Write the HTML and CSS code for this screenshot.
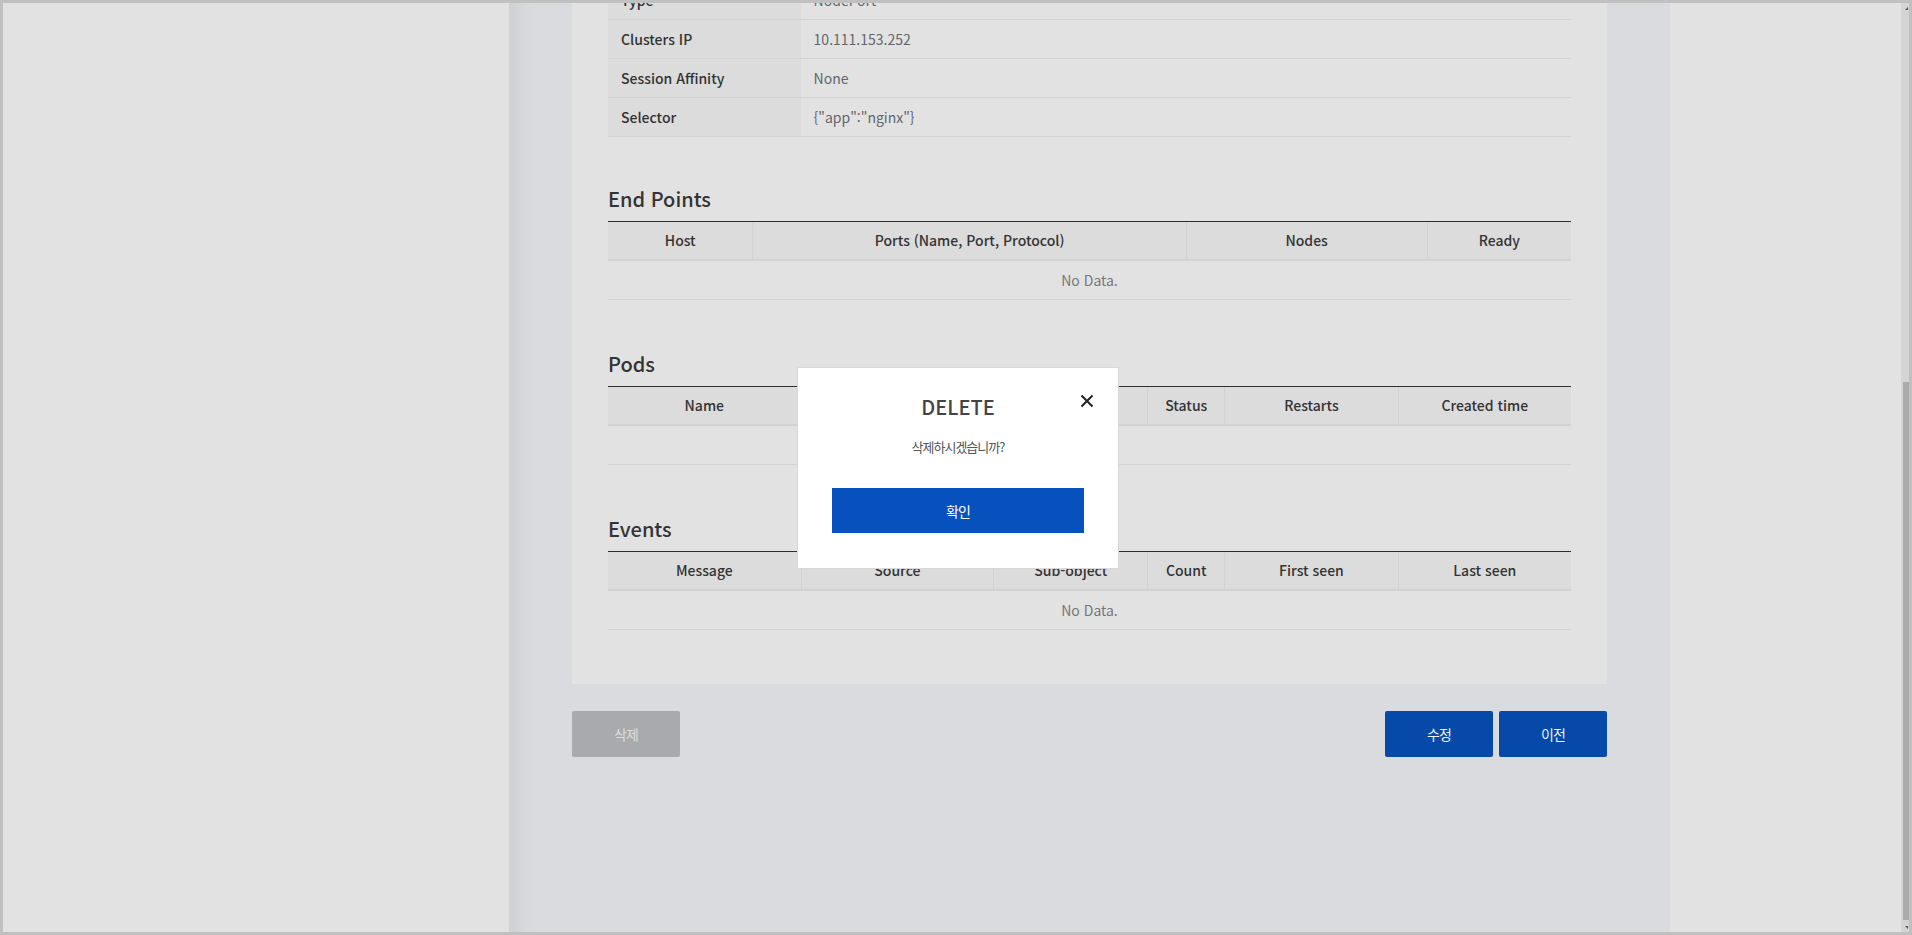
FILE: index.html
```html
<!DOCTYPE html>
<html lang="ko">
<head>
<meta charset="utf-8">
<title>Service Detail</title>
<link rel="stylesheet" href="styles.css">
</head>
<body>
<div class="frame">
  <div class="screen">
    <aside class="sidebar"></aside>
    <main class="main">
      <section class="card">
        <table class="info">
          <colgroup><col class="c-label"><col></colgroup>
          <tr><th>Type</th><td>NodePort</td></tr>
          <tr><th>Clusters IP</th><td>10.111.153.252</td></tr>
          <tr><th>Session Affinity</th><td>None</td></tr>
          <tr><th>Selector</th><td>{"app":"nginx"}</td></tr>
        </table>

        <div class="block first">
          <h3 class="block-title">End Points</h3>
          <table class="grid">
            <colgroup><col class="w15"><col class="w45"><col class="w25"><col class="w15"></colgroup>
            <thead><tr><th>Host</th><th>Ports (Name, Port, Protocol)</th><th>Nodes</th><th>Ready</th></tr></thead>
            <tbody><tr><td colspan="4" class="empty">No Data.</td></tr></tbody>
          </table>
        </div>

        <div class="block">
          <h3 class="block-title">Pods</h3>
          <table class="grid">
            <colgroup><col class="w20"><col class="w20"><col class="w16"><col class="w8"><col class="w18"><col class="w18"></colgroup>
            <thead><tr><th>Name</th><th>Namespace</th><th>Node</th><th>Status</th><th>Restarts</th><th>Created time</th></tr></thead>
            <tbody><tr><td colspan="6" class="empty">No Data.</td></tr></tbody>
          </table>
        </div>

        <div class="block">
          <h3 class="block-title">Events</h3>
          <table class="grid">
            <colgroup><col class="w20"><col class="w20"><col class="w16"><col class="w8"><col class="w18"><col class="w18"></colgroup>
            <thead><tr><th>Message</th><th>Source</th><th>Sub-object</th><th>Count</th><th>First seen</th><th>Last seen</th></tr></thead>
            <tbody><tr><td colspan="6" class="empty">No Data.</td></tr></tbody>
          </table>
        </div>
      </section>

      <div class="actions">
        <button class="btn btn-gray" type="button">삭제</button>
        <div class="actions-right">
          <button class="btn btn-blue" type="button">수정</button>
          <button class="btn btn-blue" type="button">이전</button>
        </div>
      </div>
    </main>
    <div class="side-right"></div>
  </div>

  <div class="scrollbar">
    <span class="arrow arrow-up"></span>
    <div class="thumb"></div>
    <span class="arrow arrow-down"></span>
  </div>

  <div class="modal-layer">
    <div class="modal" role="dialog">
      <button class="modal-close" type="button" aria-label="close">
        <svg width="14" height="14" viewBox="0 0 14 14"><path d="M1.5 1.5 L12.5 12.5 M12.5 1.5 L1.5 12.5" stroke="#222" stroke-width="2" fill="none"/></svg>
      </button>
      <div class="modal-title">DELETE</div>
      <p class="modal-msg">삭제하시겠습니까?</p>
      <button class="modal-ok" type="button">확인</button>
    </div>
  </div>
</div>
</body>
</html>
```

FILE: styles.css
```css
html, body {
  margin: 0;
  padding: 0;
  overflow: hidden;
}

body {
  font-family: "Noto Sans CJK KR", "Noto Sans", sans-serif;
  color: #333;
  background: #c0c0c0;
}

.frame {
  position: relative;
  box-sizing: border-box;
  width: 1912px;
  height: 935px;
  border: 3px solid #c0c0c0;
  display: flex;
  overflow: hidden;
}

.screen {
  flex: 1;
  display: flex;
  overflow: hidden;
  background: #e2e2e2;
}

.sidebar {
  width: 506px;
  flex: none;
  background: #e2e2e2;
}

.main {
  width: 1161px;
  flex: none;
  box-sizing: border-box;
  padding: 0 63px;
  background: linear-gradient(to right, #cfd0d4 0px, #d8d9dc 18px, #dadbde 30px, #dadbde 100%);
}

.side-right {
  flex: 1;
  background: #e2e2e2;
}

/* card */
.card {
  margin-top: -22px;
  background: #e2e2e2;
  padding: 0 36px 54px;
}

table {
  width: 100%;
  border-spacing: 0;
  table-layout: fixed;
  font-size: 14px;
}

.info th,
.info td {
  padding: 0 13px;
  line-height: 38px;
  border-bottom: 1px solid #d3d3d3;
  text-align: left;
  white-space: nowrap;
}

.info th {
  background: #dcdcdc;
  font-weight: 500;
  color: #333;
}

.info td {
  color: #62666d;
  font-weight: 400;
}

.c-label { width: 20%; }
.w8 { width: 8%; }
.w15 { width: 15%; }
.w16 { width: 16%; }
.w18 { width: 18%; }
.w20 { width: 20%; }
.w25 { width: 25%; }
.w45 { width: 45%; }

.block {
  margin-top: 50px;
}

.block.first {
  margin-top: 48px;
}

.block-title {
  margin: 0 0 8px;
  font-size: 20px;
  line-height: 28px;
  font-weight: 500;
  color: #333;
}

.grid {
  border-top: 1px solid #2e2e2e;
}

.grid th {
  padding: 0;
  line-height: 37px;
  background: #dcdcdc;
  border-bottom: 2px solid #d2d2d2;
  font-weight: 500;
  color: #333;
  text-align: center;
  white-space: nowrap;
}

.grid th + th {
  border-left: 1px solid #d2d2d2;
}

.grid td {
  padding: 0;
  line-height: 38px;
  border-bottom: 1px solid #d3d3d3;
  text-align: center;
}

.grid td.empty {
  color: #777;
}

/* actions */
.actions {
  margin-top: 27px;
  display: flex;
  justify-content: space-between;
}

.actions-right {
  display: flex;
  gap: 6px;
}

.btn {
  width: 108px;
  height: 46px;
  border: 0;
  border-radius: 2px;
  font-family: inherit;
  font-size: 14px;
  letter-spacing: -1px;
  padding: 0;
}

.btn-gray {
  background: #a9aaad;
  color: #dedede;
}

.btn-blue {
  background: #0749a9;
  color: #f2f2f2;
}

/* scrollbar */
.scrollbar {
  width: 8px;
  flex: none;
  background: #d4d4d4;
  display: flex;
  flex-direction: column;
  align-items: flex-end;
}

.arrow {
  display: block;
  width: 0;
  height: 0;
  margin-right: 1px;
}

.arrow-up {
  margin-top: 4px;
  border-left: 3px solid transparent;
  border-bottom: 3px solid #555;
}

.arrow-down {
  margin-top: auto;
  margin-bottom: 3px;
  border-left: 3px solid transparent;
  border-top: 3px solid #555;
}

.thumb {
  width: 6px;
  height: 538px;
  margin-top: 372px;
  background: #ababab;
}

/* modal */
.modal-layer {
  position: absolute;
  inset: 0;
  display: flex;
  align-items: center;
  justify-content: center;
  padding: 1px 0 0 4px;
}

.modal {
  position: relative;
  box-sizing: border-box;
  width: 322px;
  height: 202px;
  background: #fff;
  border: 1px solid #d8d8d8;
  padding: 25px 34px 35px;
  display: flex;
  flex-direction: column;
  align-items: stretch;
}

.modal-close {
  position: absolute;
  top: 26px;
  right: 24px;
  width: 14px;
  height: 14px;
  padding: 0;
  border: 0;
  background: transparent;
  display: flex;
}

.modal-title {
  text-align: center;
  font-size: 20px;
  line-height: 28px;
  font-weight: 500;
  color: #444;
}

.modal-msg {
  margin: 16px 0 0;
  text-align: center;
  font-size: 13px;
  line-height: 20px;
  color: #555;
  letter-spacing: -1px;
}

.modal-ok {
  margin-top: 31px;
  height: 45px;
  border: 0;
  padding: 0;
  background: #0751bf;
  color: #fff;
  font-family: inherit;
  font-size: 14px;
  letter-spacing: -1px;
}
```
